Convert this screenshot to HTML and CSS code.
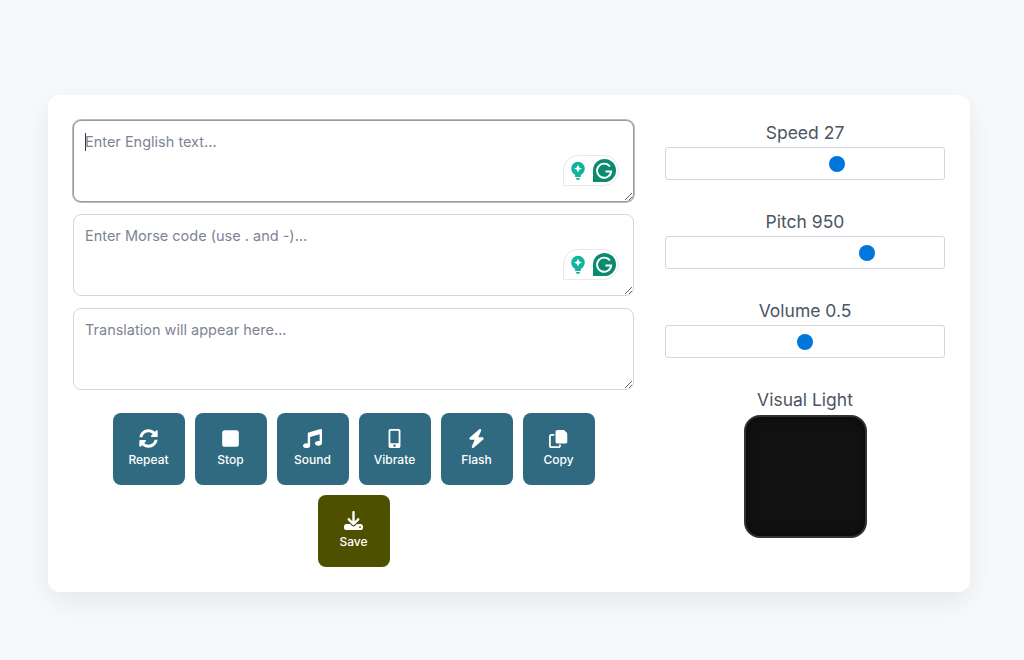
FILE: index.html
```html
<!DOCTYPE html>
<html lang="en">
<head>
    <meta charset="UTF-8">
    <meta name="viewport" content="width=device-width, initial-scale=1.0">
    <title>Morse Code Translator</title>
    <link rel="stylesheet" href="styles.css">
</head>
<body>
    <div class="translator-card">
        <div class="text-column">
            <div class="text-field">
                <textarea class="text-input text-input-focus" placeholder="Enter English text..."></textarea>
                <span class="caret"></span>
                <div class="grammar-widget">
                    <svg class="grammar-bulb" viewBox="0 0 20 24"><circle cx="10" cy="9" r="8.500" fill="#10b39b"/><path d="M10 4l1.500 3.500 3.500 1.500-3.500 1.500-1.500 3.500-1.500-3.500-3.500-1.500 3.500-1.500z" fill="#fff"/><rect x="6" y="17" width="8" height="2.400" rx="1.200" fill="#10b39b"/><rect x="7.500" y="20.600" width="5" height="2.200" rx="1.100" fill="#10b39b"/></svg>
                    <svg class="grammar-logo" viewBox="0 0 24 24"><path d="M12 0a12 12 0 0 1 0 24H0V12A12 12 0 0 1 12 0z" fill="#0a8a70"/><path d="M17.600 7.800A7.400 7.400 0 1 0 19 13h-6" fill="none" stroke="#fff" stroke-width="2"/></svg>
                </div>
            </div>
            <div class="text-field">
                <textarea class="text-input" placeholder="Enter Morse code (use . and -)..."></textarea>
                <div class="grammar-widget">
                    <svg class="grammar-bulb" viewBox="0 0 20 24"><circle cx="10" cy="9" r="8.500" fill="#10b39b"/><path d="M10 4l1.500 3.500 3.500 1.500-3.500 1.500-1.500 3.500-1.500-3.500-3.500-1.500 3.500-1.500z" fill="#fff"/><rect x="6" y="17" width="8" height="2.400" rx="1.200" fill="#10b39b"/><rect x="7.500" y="20.600" width="5" height="2.200" rx="1.100" fill="#10b39b"/></svg>
                    <svg class="grammar-logo" viewBox="0 0 24 24"><path d="M12 0a12 12 0 0 1 0 24H0V12A12 12 0 0 1 12 0z" fill="#0a8a70"/><path d="M17.600 7.800A7.400 7.400 0 1 0 19 13h-6" fill="none" stroke="#fff" stroke-width="2"/></svg>
                </div>
            </div>
            <div class="text-field">
                <textarea class="text-input" placeholder="Translation will appear here..." readonly></textarea>
            </div>

            <div class="action-buttons">
                <button class="action-btn">
                    <svg class="action-icon" viewBox="0 0 512 512"><path d="M370.72 133.28C339.458 104.008 298.888 87.962 255.848 88c-77.458.068-144.328 53.178-162.791 126.85-1.344 5.363-6.122 9.15-11.651 9.15H24.103c-7.498 0-13.194-6.807-11.807-14.176C33.933 94.924 134.813 8 256 8c66.448 0 126.791 26.136 171.315 68.685L463.03 40.97C478.149 25.851 504 36.559 504 57.941V192c0 13.255-10.745 24-24 24H345.941c-21.382 0-32.09-25.851-16.971-40.971l41.75-41.749zM32 296h134.059c21.382 0 32.09 25.851 16.971 40.971l-41.75 41.75c31.262 29.273 71.835 45.319 114.876 45.28 77.418-.07 144.315-53.144 162.787-126.849 1.344-5.363 6.122-9.15 11.651-9.15h57.304c7.498 0 13.194 6.807 11.807 14.176C478.067 417.076 377.187 504 256 504c-66.448 0-126.791-26.136-171.315-68.685L48.97 471.03C33.851 486.149 8 475.441 8 454.059V320c0-13.255 10.745-24 24-24z"/></svg>
                    Repeat
                </button>
                <button class="action-btn">
                    <svg class="action-icon" viewBox="0 0 448 512"><path d="M64 32h320c35.300 0 64 28.700 64 64v320c0 35.300-28.700 64-64 64H64c-35.300 0-64-28.700-64-64V96c0-35.300 28.700-64 64-64z"/></svg>
                    Stop
                </button>
                <button class="action-btn">
                    <svg class="action-icon" viewBox="0 0 512 512"><path d="M470.38 1.51L150.41 96A32 32 0 0 0 128 126.51v261.41A139 139 0 0 0 96 384c-53 0-96 28.66-96 64s43 64 96 64 96-28.66 96-64V214.32l256-75v184.61a138.4 138.4 0 0 0-32-3.93c-53 0-96 28.66-96 64s43 64 96 64 96-28.65 96-64V32a32 32 0 0 0-41.62-30.49z"/></svg>
                    Sound
                </button>
                <button class="action-btn">
                    <svg class="action-icon" viewBox="0 0 320 512"><path d="M272 0H48C21.500 0 0 21.500 0 48v416c0 26.500 21.500 48 48 48h224c26.500 0 48-21.500 48-48V48c0-26.500-21.500-48-48-48zM160 480c-17.700 0-32-14.300-32-32s14.300-32 32-32 32 14.300 32 32-14.300 32-32 32zm112-108c0 6.600-5.400 12-12 12H60c-6.600 0-12-5.400-12-12V60c0-6.600 5.400-12 12-12h200c6.600 0 12 5.400 12 12v312z"/></svg>
                    Vibrate
                </button>
                <button class="action-btn">
                    <svg class="action-icon" viewBox="0 0 448 512"><path d="M349.400 44.600c5.900-13.700 1.500-29.700-10.600-38.500s-28.600-8-39.900 1.800l-256 224c-10 8.800-13.600 22.900-8.900 35.300S50.700 288 64 288H175.500L98.600 467.400c-5.900 13.700-1.500 29.700 10.600 38.500s28.600 8 39.900-1.800l256-224c10-8.800 13.600-22.900 8.900-35.300s-16.600-20.700-30-20.700H272.500L349.400 44.600z"/></svg>
                    Flash
                </button>
                <button class="action-btn">
                    <svg class="action-icon" viewBox="0 0 512 512"><path d="M224 24h160c10 0 20 4 28 12l68 68c8 8 12 18 12 28v212c0 26.500-21.500 48-48 48H224c-26.500 0-48-21.500-48-48V72c0-26.500 21.500-48 48-48z"/><path d="M64 136h80v48H64c-8.800 0-16 7.200-16 16v248c0 8.800 7.200 16 16 16h192c8.800 0 16-7.200 16-16v-32h48v32c0 35.300-28.700 64-64 64H64c-35.300 0-64-28.700-64-64V200c0-35.300 28.700-64 64-64z"/></svg>
                    Copy
                </button>
                <button class="action-btn action-btn-save">
                    <svg class="action-icon" viewBox="0 0 512 512"><path d="M288 32c0-17.700-14.300-32-32-32s-32 14.300-32 32V274.700l-73.400-73.400c-12.500-12.500-32.800-12.500-45.300 0s-12.500 32.800 0 45.300l128 128c12.500 12.500 32.800 12.500 45.300 0l128-128c12.500-12.500 12.500-32.800 0-45.300s-32.800-12.500-45.300 0L288 274.700V32zM64 352c-35.300 0-64 28.700-64 64v32c0 35.300 28.700 64 64 64H448c35.300 0 64-28.700 64-64V416c0-35.300-28.700-64-64-64H346.500l-45.300 45.300c-25 25-65.500 25-90.500 0L165.500 352H64zm368 56a24 24 0 1 1 0 48 24 24 0 1 1 0-48z"/></svg>
                    Save
                </button>
            </div>
        </div>

        <div class="control-column">
            <div class="control-group">
                <label class="control-label" for="speed">Speed 27</label>
                <input class="control-range" id="speed" type="range" min="5" max="40" value="27">
            </div>
            <div class="control-group">
                <label class="control-label" for="pitch">Pitch 950</label>
                <input class="control-range" id="pitch" type="range" min="200" max="1200" value="950">
            </div>
            <div class="control-group">
                <label class="control-label" for="volume">Volume 0.5</label>
                <input class="control-range" id="volume" type="range" min="0" max="1" step="0.1" value="0.5">
            </div>
            <div class="control-group">
                <div class="control-label">Visual Light</div>
                <div class="visual-light"></div>
            </div>
        </div>
    </div>
</body>
</html>
```

FILE: styles.css
```css
body {
    font-family: Inter, 'Noto Sans', sans-serif;
    margin: 0;
    min-height: 100vh;
    background: #f8f9fb;
    color: #4b5563;
}

.translator-card {
    width: 922px;
    box-sizing: border-box;
    margin: 95px 0 0 48px;
    padding: 25px;
    background: white;
    border-radius: 12px;
    box-shadow: 0 10px 30px rgba(0,0,0,0.08);
    display: grid;
    grid-template-columns: 1fr 280px;
    gap: 31px;
}

.text-column {
    display: flex;
    flex-direction: column;
}

.text-field {
    position: relative;
    margin-bottom: 12px;
}

.text-input {
    display: block;
    width: 100%;
    height: 82px;
    box-sizing: border-box;
    padding: 11px;
    border: 1px solid #d3d6db;
    border-radius: 8px;
    background: white;
    font-family: inherit;
    font-size: 14.5px;
    line-height: 20px;
    outline: none;
}

.text-input::placeholder {
    color: #7d8494;
    opacity: 1;
}

.text-input-focus {
    border-color: #9a9ca0;
    box-shadow: 0 0 0 1px #b8babd;
}

.caret {
    position: absolute;
    left: 12px;
    top: 13px;
    width: 1px;
    height: 18px;
    background: #333c4a;
}

.grammar-widget {
    position: absolute;
    right: 15px;
    top: 35px;
    width: 56px;
    height: 31px;
    box-sizing: border-box;
    display: flex;
    align-items: center;
    padding-left: 6px;
    background: white;
    border: 1px solid #e7e9ec;
    border-radius: 16px 16px 16px 0;
}

.grammar-bulb {
    width: 16px;
    height: 20px;
}

.grammar-logo {
    width: 23px;
    height: 23px;
    margin-left: 7px;
}

.action-buttons {
    display: flex;
    flex-wrap: wrap;
    justify-content: center;
    gap: 10px;
    margin-top: 11px;
}

.action-btn {
    width: 72px;
    height: 72px;
    padding: 0 0 2px;
    border: none;
    border-radius: 8px;
    background: #2f6a80;
    color: white;
    font-family: inherit;
    font-size: 12px;
    font-weight: 500;
    display: flex;
    flex-direction: column;
    align-items: center;
    justify-content: center;
    gap: 4px;
}

.action-btn-save {
    background: #4f4f00;
}

.action-icon {
    height: 19px;
    width: 19px;
    fill: white;
}

.control-column {
    display: flex;
    flex-direction: column;
    gap: 29px;
}

.control-group {
    display: flex;
    flex-direction: column;
    align-items: center;
    gap: 3px;
}

.control-label {
    font-size: 17.5px;
    line-height: 23px;
    padding-top: 1px;
}

.control-range {
    -webkit-appearance: none;
    appearance: none;
    width: 100%;
    height: 33px;
    box-sizing: border-box;
    margin: 0;
    padding: 0 8px;
    border: 1px solid #d3d6db;
    border-radius: 3px;
    background: white;
}

.control-range::-webkit-slider-runnable-track {
    background: transparent;
    height: 16px;
}

.control-range::-webkit-slider-thumb {
    -webkit-appearance: none;
    width: 16px;
    height: 16px;
    border-radius: 50%;
    background: #0075db;
}

.visual-light {
    width: 123px;
    height: 123px;
    box-sizing: border-box;
    margin-top: 1px;
    border: 2px solid #333;
    border-radius: 16px;
    background: #111;
    box-shadow: inset 0 0 10px rgba(0,0,0,0.5);
}
```
